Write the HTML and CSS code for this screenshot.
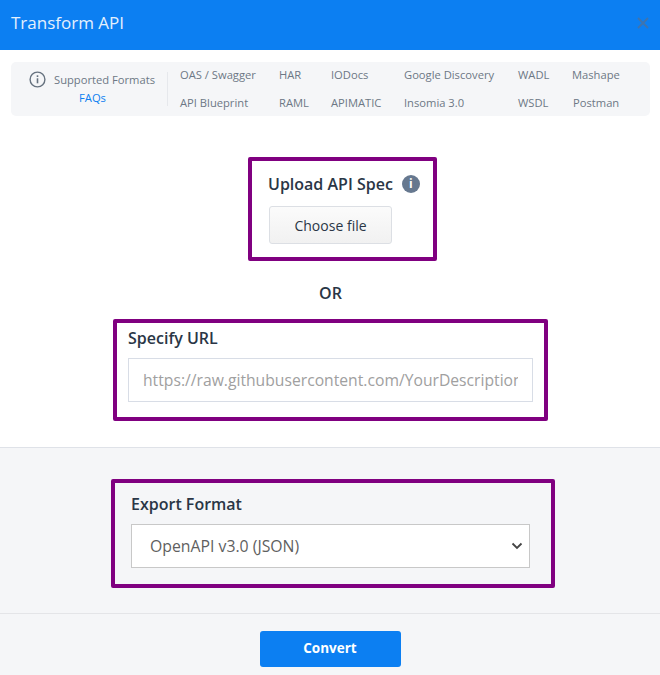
FILE: index.html
```html
<!DOCTYPE html>
<html lang="en">
<head>
    <meta charset="UTF-8">
    <title>Transform API</title>
    <link rel="stylesheet" href="styles.css">
</head>
<body>
    <div class="header">
        <div class="title">Transform API</div>
        <svg class="close" width="12" height="12" viewBox="0 0 12 12"><path d="M1 1l10 10M11 1L1 11" stroke="#3f74ae" stroke-width="1.8" fill="none"/></svg>
    </div>

    <div class="top-area">
        <div class="formats">
            <div class="formats-intro">
                <div class="formats-label">
                    <svg width="17" height="17" viewBox="0 0 17 17"><circle cx="8.5" cy="8.5" r="7.4" stroke="#66727f" stroke-width="1.4" fill="none"/><rect x="7.700" y="7.300" width="1.600" height="5" fill="#66727f"/><rect x="7.700" y="4.300" width="1.600" height="1.700" fill="#66727f"/></svg>
                    <span>Supported Formats</span>
                </div>
                <a class="faqs" href="#">FAQs</a>
            </div>
            <div class="format-list">
                <span>OAS / Swagger</span>
                <span>HAR</span>
                <span>IODocs</span>
                <span>Google Discovery</span>
                <span>WADL</span>
                <span>Mashape</span>
                <span>API Blueprint</span>
                <span>RAML</span>
                <span>APIMATIC</span>
                <span>Insomia 3.0</span>
                <span>WSDL</span>
                <span class="postman">Postman</span>
            </div>
        </div>

        <div class="upload-box">
            <div class="upload-title">
                <span>Upload API Spec</span>
                <span class="info-badge">i</span>
            </div>
            <button class="choose-file">Choose file</button>
        </div>

        <div class="or">OR</div>

        <div class="url-box">
            <label class="field-label">Specify URL</label>
            <input class="url-input" type="text" placeholder="https://raw.githubusercontent.com/YourDescriptionFile.json">
        </div>
    </div>

    <div class="export-area">
        <div class="export-box">
            <label class="field-label">Export Format</label>
            <div class="select-box">
                <span>OpenAPI v3.0 (JSON)</span>
                <svg width="12" height="8" viewBox="0 0 12 8"><path d="M1.500 1.500L6 6l4.500-4.500" stroke="#444" stroke-width="1.800" fill="none"/></svg>
            </div>
        </div>
    </div>

    <div class="footer">
        <button class="convert">Convert</button>
    </div>
</body>
</html>
```

FILE: styles.css
```css
* {
    box-sizing: border-box;
}
body {
    margin: 0;
    font-family: "Open Sans", sans-serif;
    color: #2a3646;
    background: #f5f6f8;
    height: 675px;
    overflow: hidden;
}
.header {
    height: 50px;
    background: #0c7ff2;
    display: flex;
    align-items: center;
    justify-content: space-between;
    padding: 0 11px 6px 11px;
}
.title {
    color: #e4f0fd;
    font-size: 17px;
}
.close {
    margin-top: 1px;
}
.top-area {
    background: white;
    height: 398px;
    padding: 12px 10px 0 11px;
    border-bottom: 1px solid #dfe2e8;
    display: flex;
    flex-direction: column;
    align-items: center;
}
.formats {
    width: 100%;
    height: 54px;
    background: #f5f6f8;
    border-radius: 5px;
    display: flex;
    align-items: center;
    font-size: 11.200px;
    color: #6d7885;
}
.formats-intro {
    width: 157px;
    height: 34px;
    border-right: 1px solid #e6e8ec;
    text-align: center;
    padding-left: 17px;
}
.formats-label {
    display: flex;
    align-items: center;
    gap: 8px;
    height: 17px;
    margin-top: -1px;
    margin-left: 1px;
}
.formats-label svg {
    flex: none;
}
.faqs {
    display: block;
    margin-top: 1px;
    padding-right: 10px;
    color: #0c7ff2;
    text-decoration: none;
    line-height: 18px;
}
.format-list {
    display: grid;
    grid-template-columns: 99px 52px 73px 114px 54px 1fr;
    grid-auto-rows: 28px;
    padding-left: 12px;
    line-height: 28px;
    white-space: nowrap;
}
.postman {
    margin-left: 1px;
}
.upload-box {
    align-self: flex-start;
    width: 189px;
    height: 104px;
    margin-top: 41px;
    margin-left: 237px;
    border: 4px solid #800080;
    border-radius: 2px;
    padding: 13px 0 0 16px;
    background: white;
}
.upload-title {
    display: flex;
    align-items: center;
    font-size: 16px;
    font-weight: 600;
    line-height: 20px;
    white-space: nowrap;
}
.info-badge {
    flex: none;
    width: 18px;
    height: 18px;
    margin-left: 9px;
    border-radius: 50%;
    background: #66788f;
    color: white;
    font-size: 12px;
    font-weight: 700;
    line-height: 18px;
    text-align: center;
}
.choose-file {
    display: block;
    width: 123px;
    height: 38px;
    margin: 12px 0 0 1px;
    border: 1px solid #dcdfe4;
    border-radius: 3px;
    background: linear-gradient(#fbfbfb, #f1f1f1);
    font-family: inherit;
    font-size: 14px;
    color: #2a3646;
}
.or {
    margin-top: 22px;
    font-size: 16px;
    font-weight: 600;
    line-height: 20px;
}
.url-box {
    width: 435px;
    height: 102px;
    margin-top: 16px;
    border: 4px solid #800080;
    border-radius: 2px;
    padding: 5px 11px 0 11px;
}
.field-label {
    display: block;
    font-size: 16px;
    font-weight: 600;
    line-height: 20px;
}
.url-input {
    display: block;
    width: 405px;
    height: 44px;
    margin-top: 10px;
    padding: 0 14px;
    border: 1px solid #d8dde6;
    font-family: inherit;
    font-size: 15.700px;
    outline: none;
}
.url-input::placeholder {
    color: #a0a0a0;
    opacity: 1;
}
.export-area {
    height: 166px;
    border-bottom: 1px solid #e4e5e8;
    padding: 31px 0 0 111px;
}
.export-box {
    width: 444px;
    height: 109px;
    border: 4px solid #800080;
    border-radius: 2px;
    padding: 11px 0 0 16px;
}
.select-box {
    display: flex;
    align-items: center;
    justify-content: space-between;
    width: 399px;
    height: 44px;
    margin-top: 10px;
    padding: 0 6px 0 18px;
    background: white;
    border: 1px solid #c8c8c8;
    font-size: 15.800px;
    color: #5f5f5f;
}
.footer {
    display: flex;
    justify-content: center;
    padding-top: 17px;
}
.convert {
    width: 141px;
    height: 36px;
    padding: 0 0 2px;
    border: none;
    border-radius: 3px;
    background: #0c7ff2;
    color: white;
    font-family: inherit;
    font-size: 13.500px;
    font-weight: 700;
}
```
